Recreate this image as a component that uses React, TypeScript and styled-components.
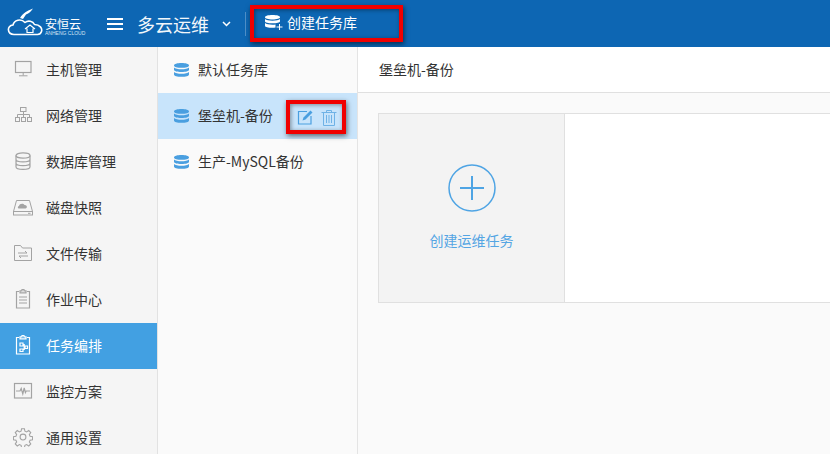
import React from 'react';
import styled, { createGlobalStyle } from 'styled-components';

const GlobalStyle = createGlobalStyle`
  html, body { margin: 0; padding: 0; height: 100%; background: #fafafa; overflow: hidden; }
  #root { height: 100%; }
  * { box-sizing: border-box; }
  body { font-family: "Noto Sans CJK SC", "Liberation Sans", sans-serif; font-size: 14px; color: #333; }
`;

const Page = styled.div`
  width: 830px;
  height: 454px;
  display: flex;
  flex-direction: column;
  overflow: hidden;
`;

const TopBar = styled.header`
  height: 47px;
  flex: none;
  background: #0d66b3;
  color: #fff;
  display: flex;
  align-items: center;
  padding-left: 7px;
`;

const LogoWrap = styled.div`
  width: 74px;
  height: 30px;
  margin-top: -6px;
  display: flex;
  align-items: flex-end;
  gap: 2px;
  flex: none;
`;

const LogoText = styled.div`
  display: flex;
  flex-direction: column;
`;

const LogoName = styled.span`
  font-size: 12px;
  height: 13px;
  line-height: 13px;
  white-space: nowrap;
`;

const LogoSub = styled.span`
  font-family: "Liberation Sans", sans-serif;
  font-size: 5px;
  height: 6px;
  line-height: 6px;
  white-space: nowrap;
  color: #d5e5f4;
`;

const Burger = styled.span`
  width: 16px;
  height: 12px;
  margin-left: 26px;
  flex: none;
  border-top: 2px solid #fff;
  border-bottom: 2px solid #fff;
  position: relative;
  &::after {
    content: '';
    position: absolute;
    left: 0;
    right: 0;
    top: 3px;
    height: 2px;
    background: #fff;
  }
`;

const ProjectTitle = styled.span`
  font-size: 18px;
  margin-left: 14px;
  white-space: nowrap;
  color: #f2f7fb;
`;

const Caret = styled.svg`
  width: 9px;
  height: 6px;
  margin-left: 13px;
  flex: none;
`;

const Divider = styled.span`
  width: 1px;
  height: 24px;
  margin: 0 4px 0 14px;
  flex: none;
  background: #4f8fc8;
`;

const Highlight = styled.div<{ $w: number; $h: number; $drop?: number }>`
  width: ${(p) => p.$w}px;
  height: ${(p) => p.$h}px;
  margin-top: ${(p) => p.$drop ?? 0}px;
  flex: none;
  border: 4px solid #f00000;
  box-shadow: 1px 2px 5px rgba(0, 0, 0, 0.55), inset 1px 1px 4px rgba(0, 0, 0, 0.4);
  display: flex;
  align-items: center;
`;

const CreateBtn = styled.div`
  display: flex;
  align-items: center;
  gap: 4px;
  font-size: 14px;
  padding: 0 0 3px 11px;
  white-space: nowrap;
`;

const Body = styled.div`
  flex: 1;
  display: flex;
  min-height: 0;
`;

const Sidebar = styled.nav`
  width: 158px;
  flex: none;
  background: #f5f5f5;
  border-right: 1px solid #e2e2e2;
  overflow: hidden;
`;

const NavItem = styled.div<{ $active?: boolean }>`
  height: 46px;
  display: flex;
  align-items: center;
  padding: 0 0 2px 12px;
  gap: 12px;
  font-size: 14px;
  background: ${(p) => (p.$active ? '#42a0e2' : 'transparent')};
  color: ${(p) => (p.$active ? '#fff' : '#333')};
`;

const NavIconBox = styled.span`
  width: 22px;
  height: 22px;
  flex: none;
  display: flex;
  align-items: center;
  justify-content: center;
`;

const ListColumn = styled.div`
  width: 200px;
  flex: none;
  background: #fafafa;
  border-right: 1px solid #e4e4e4;
`;

const ListRow = styled.div<{ $active?: boolean }>`
  height: 46px;
  display: flex;
  align-items: center;
  padding-left: 16px;
  font-size: 14px;
  background: ${(p) => (p.$active ? '#c8e4fb' : 'transparent')};
`;

const RowLabel = styled.span`
  margin: -3px 0 0 9px;
  white-space: nowrap;
  width: 88px;
  flex: none;
`;

const RowActions = styled.div`
  display: flex;
  align-items: center;
  gap: 7px;
  padding-left: 7px;
`;

const Main = styled.main`
  flex: 1;
  min-width: 0;
  display: flex;
  flex-direction: column;
  background: #fafafa;
`;

const MainTitle = styled.div`
  height: 46px;
  flex: none;
  background: #fff;
  border-bottom: 1px solid #e0e0e0;
  display: flex;
  align-items: center;
  padding: 0 0 2px 21px;
  font-size: 14px;
`;

const Board = styled.div`
  margin: 20px 0 0 20px;
  height: 190px;
  display: flex;
  border: 1px solid #e0e0e0;
  border-right: none;
  background: #fff;
`;

const AddCard = styled.div`
  width: 186px;
  flex: none;
  background: #f3f3f3;
  border-right: 1px solid #e0e0e0;
  display: flex;
  flex-direction: column;
  align-items: center;
  padding-top: 50px;
  color: #54a5e3;
  font-size: 14px;
`;

const AddCircle = styled.svg`
  width: 48px;
  height: 48px;
  margin-bottom: 18px;
`;

const Db = ({ color = '#4a9fe0' }: { color?: string }) => (
  <svg width="15" height="16" viewBox="0 0 15 16">
    <path d="M0 3.400C0 1.900 3.200 1 7.500 1S15 1.900 15 3.400 11.800 5.800 7.500 5.800 0 4.900 0 3.400z" fill={color} />
    <path d="M0 5.400c1 1.200 4.200 1.800 7.500 1.800s6.500-.6 7.500-1.800v2.400c0 1.400-3.200 2.200-7.500 2.200S0 9.200 0 7.800z" fill={color} />
    <path d="M0 9.900c1 1.200 4.200 1.800 7.500 1.800s6.500-.6 7.500-1.800v2.500c0 1.500-3.200 2.400-7.500 2.400S0 13.900 0 12.400z" fill={color} />
  </svg>
);

const g = { fill: 'none', stroke: '#a3a3a3', strokeWidth: 1 };

const MonitorIcon = () => (
  <svg width="20" height="20" viewBox="0 0 20 20" {...g}>
    <rect x="2.500" y="2.500" width="15.500" height="11" strokeWidth="1.200" />
    <path d="M10.200 13.500v3M6 16.800h8.500" />
  </svg>
);
const NetworkIcon = () => (
  <svg width="20" height="20" viewBox="0 0 20 20" {...g}>
    <rect x="7.500" y="2.500" width="5.500" height="4" />
    <rect x="2.500" y="12.500" width="4" height="4" />
    <rect x="8.500" y="12.500" width="4" height="4" />
    <rect x="14.500" y="12.500" width="4" height="4" />
    <path d="M10.500 6.500v6M4.500 12.500v-3h12v3" />
  </svg>
);
const DbLineIcon = () => (
  <svg width="20" height="20" viewBox="0 0 20 20" {...g} strokeWidth="1.200">
    <ellipse cx="10" cy="4.500" rx="7" ry="2.600" />
    <path d="M3 4.500v11.200c0 1.500 3.100 2.600 7 2.600s7-1.100 7-2.600V4.500M3 8.300c0 1.500 3.100 2.600 7 2.600s7-1.100 7-2.600M3 12c0 1.500 3.100 2.600 7 2.600s7-1.100 7-2.600" />
  </svg>
);
const DiskIcon = () => (
  <svg width="22" height="20" viewBox="0 0 22 20" {...g}>
    <path d="M4.500 3.500h13l3 11h-19z" />
    <rect x="1.500" y="14.500" width="19" height="3.500" />
    <path d="M7 11.500c-1.600-.1-1.600-2.500 0-2.600.3-2.400 4.400-3.200 5.500-.8 2.400-.4 3.500 3 .9 3.400z" fill="#a3a3a3" stroke="none" />
    <path d="M16 16.300h2.500" />
  </svg>
);
const FolderIcon = () => (
  <svg width="20" height="20" viewBox="0 0 20 20" {...g}>
    <path d="M1.500 2.500h6l2 2.500h9v12.500h-17z" />
    <path d="M5 10h9l-2-2M15 13H6l2 2" />
  </svg>
);
const ClipIcon = ({ color = '#a3a3a3', dots = false }: { color?: string; dots?: boolean }) => (
  <svg width="20" height="22" viewBox="0 0 20 22" fill="none" stroke={color} strokeWidth="1.200">
    <path d="M6 3.500H3.500v16.500h13V3.500H14M7 4.800V2.800h2V1.500h2v1.300h2v2z" />
    {dots ? (
      <path d="M7 9h3v3H7zM12 12h2.500v2.500H12zM7 15h3v2.500H7zM10 10.500h1.200v5H10" />
    ) : (
      <path d="M6 9h8M6 12h8M6 15h8" />
    )}
  </svg>
);
const PulseIcon = () => (
  <svg width="20" height="18" viewBox="0 0 20 18" {...g} strokeWidth="1.200">
    <rect x="1.500" y="1.500" width="17" height="14.500" />
    <path d="M3 9h4l1.200-2.500L9.800 12l1.400-6 1.200 4.500.8-1.500H17" />
  </svg>
);
const GearIcon = () => (
  <svg width="20" height="20" viewBox="0 0 24 24" {...g} strokeWidth="1.300">
    <circle cx="12" cy="12" r="3.500" />
    <path d="M10.300 2h3.400l.6 3 2 .9 2.600-1.700 2.400 2.400-1.700 2.600.9 2 3 .6v3.400l-3 .6-.9 2 1.700 2.600-2.400 2.400-2.600-1.700-2 .9-.6 3h-3.400l-.6-3-2-.9-2.600 1.700-2.400-2.400 1.700-2.600-.9-2-3-.6v-3.400l3-.6.9-2-1.700-2.600 2.400-2.400 2.600 1.700 2-.9z" />
  </svg>
);

const navItems: { label: string; icon: React.ReactNode; active?: boolean }[] = [
  { label: '主机管理', icon: <MonitorIcon /> },
  { label: '网络管理', icon: <NetworkIcon /> },
  { label: '数据库管理', icon: <DbLineIcon /> },
  { label: '磁盘快照', icon: <DiskIcon /> },
  { label: '文件传输', icon: <FolderIcon /> },
  { label: '作业中心', icon: <ClipIcon /> },
  { label: '任务编排', icon: <ClipIcon color="#fff" dots />, active: true },
  { label: '监控方案', icon: <PulseIcon /> },
  { label: '通用设置', icon: <GearIcon /> },
];

const App: React.FC = () => (
  <Page>
    <GlobalStyle />
    <TopBar>
      <LogoWrap>
        <svg width="36" height="28" viewBox="0 0 36 28" fill="none" stroke="#fff" strokeWidth="1.600" style={{ flex: 'none' }}>
          <path d="M7 26.500c-7 0-7.500-9-1-9.500 1-5 8-7 12-2.500 3-2.500 8-1.500 9.500 2 5.500 0 8 4 7 7-.6 1.800-2 3-4 3z" strokeLinecap="round" strokeLinejoin="round" />
          <path d="M18 21l5-4 5 4M20 20.500v4h6v-4" strokeWidth="1.200" />
          <path d="M13 10C16 5 20 3 26 .5c-2 3-4 5-7 6l-3 4.500z" fill="#fff" stroke="none" />
        </svg>
        <LogoText>
          <LogoName>安恒云</LogoName>
          <LogoSub>ANHENG CLOUD</LogoSub>
        </LogoText>
      </LogoWrap>
      <Burger />
      <ProjectTitle>多云运维</ProjectTitle>
      <Caret viewBox="0 0 9 6" fill="none" stroke="#fff" strokeWidth="1.500">
        <path d="M1 1l3.500 3.500L8 1" />
      </Caret>
      <Divider />
      <Highlight $w={153} $h={37}>
        <CreateBtn>
          <svg width="18" height="17" viewBox="0 0 18 17">
            <path d="M0 3.200C0 1.800 3.200 1 7.500 1S15 1.800 15 3.200 11.800 5.400 7.500 5.400 0 4.600 0 3.200z" fill="#fff" />
            <path d="M0 5c1 1.100 4.200 1.700 7.500 1.700S14 6.100 15 5v2.200c0 1.300-3.200 2.100-7.500 2.100S0 8.500 0 7.200z" fill="#fff" />
            <path d="M0 9c1 1.100 4.200 1.700 7.500 1.700 1 0 2-.1 3-.3v3.100c-1 .2-2 .3-3 .3-4.300 0-7.500-.8-7.500-2.100z" fill="#fff" />
            <path d="M14.500 10v6M11.500 13h6" stroke="#fff" strokeWidth="1" />
          </svg>
          创建任务库
        </CreateBtn>
      </Highlight>
    </TopBar>
    <Body>
      <Sidebar>
        {navItems.map((item) => (
          <NavItem key={item.label} $active={item.active}>
            <NavIconBox>{item.icon}</NavIconBox>
            {item.label}
          </NavItem>
        ))}
      </Sidebar>
      <ListColumn>
        <ListRow>
          <Db />
          <RowLabel>默认任务库</RowLabel>
        </ListRow>
        <ListRow $active>
          <Db />
          <RowLabel>堡垒机-备份</RowLabel>
          <Highlight $w={60} $h={34} $drop={2}>
            <RowActions>
              <svg width="17" height="16" viewBox="0 0 17 16" fill="none" stroke="#4a9fe0">
                <path d="M10 2.500H1.500v12.500h12.500V7" strokeWidth="1.200" />
                <path d="M5.500 11.500l1-3L13.500 1.500l2 2-7 7z" fill="#4a9fe0" stroke="none" />
              </svg>
              <svg width="16" height="17" viewBox="0 0 16 17" fill="none" stroke="#6fb2e6" strokeWidth="1">
                <path d="M.5 3.500h15M5.500 3.500V1.500h5v2M2.500 3.500v13h11v-13M5.500 6v8M8 6v8M10.500 6v8" />
              </svg>
            </RowActions>
          </Highlight>
        </ListRow>
        <ListRow>
          <Db />
          <RowLabel>生产-MySQL备份</RowLabel>
        </ListRow>
      </ListColumn>
      <Main>
        <MainTitle>堡垒机-备份</MainTitle>
        <Board>
          <AddCard>
            <AddCircle viewBox="0 0 48 48" fill="none" stroke="#4ea4e4">
              <circle cx="24" cy="24" r="23" strokeWidth="1.500" />
              <path d="M24 12v24M12 24h24" strokeWidth="2" />
            </AddCircle>
            创建运维任务
          </AddCard>
        </Board>
      </Main>
    </Body>
  </Page>
);

export default App;
